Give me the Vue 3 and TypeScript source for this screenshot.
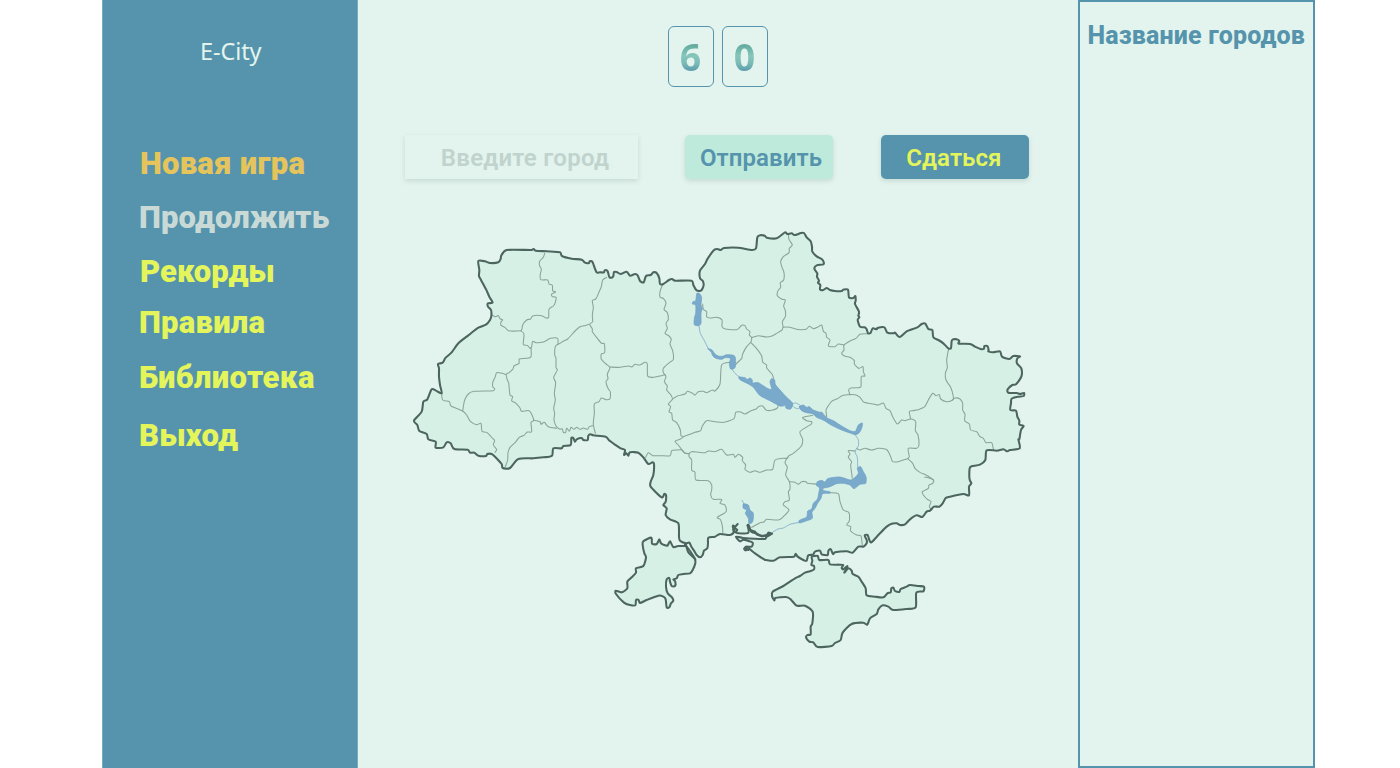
<script setup lang="ts">
type Piece = [number, number, string]

interface MenuItem {
  label: string
  kind: string
}

const menu: MenuItem[] = [
  { label: 'Новая игра', kind: 'new' },
  { label: 'Продолжить', kind: 'resume' },
  { label: 'Рекорды', kind: 'records' },
  { label: 'Правила', kind: 'rules' },
  { label: 'Библиотека', kind: 'library' },
  { label: 'Выход', kind: 'exit' },
]

const digits: string[] = ['6', '0']

// Each piece is [offset x, offset y, "x,y x,y ..."]; pieces are joined into one
// line whose corners are lightly rounded.
function path(pieces: Piece[], closed = false): string {
  const pts = pieces.flatMap(([dx, dy, s]) =>
    s.trim().split(/\s+/).map((p) => {
      const [x, y] = p.split(',').map(Number)
      return [x + dx, y + dy]
    }),
  )
  const n = pts.length
  const at = (i: number) => (closed ? pts[(i + n) % n] : pts[Math.max(0, Math.min(n - 1, i))])
  const k = 0.13
  let d = `M${pts[0][0]} ${pts[0][1]}`
  for (let i = 0; i < (closed ? n : n - 1); i++) {
    const [a, b, c, e] = [at(i - 1), at(i), at(i + 1), at(i + 2)]
    const limit = Math.hypot(c[0] - b[0], c[1] - b[1]) * 0.4
    const handle = (vx: number, vy: number) => {
      const len = Math.hypot(vx, vy) * k || 1
      const f = k * Math.min(1, limit / len)
      return [vx * f, vy * f]
    }
    const h1 = handle(c[0] - a[0], c[1] - a[1])
    const h2 = handle(e[0] - b[0], e[1] - b[1])
    const q = [b[0] + h1[0], b[1] + h1[1], c[0] - h2[0], c[1] - h2[1], c[0], c[1]]
    d += 'C' + q.map((v) => v.toFixed(1)).join(' ')
  }
  return d + (closed ? 'Z' : '')
}

const land: string[] = [
  path([
    [0, 0, '125,490 120,465 117,440 117,415 114,402 128,398 137,383 155,367 175,340 205,316 235,293 258,284 270,270 274,258 273,240 264,230 264,220 278,218 268,200 258,178 243,150 237,138 238,120 235,93 255,94 270,99 295,97 302,87 304,76 320,60 395,60 401,57 407,62 440,64 480,67 486,78 515,86 545,89 555,98 567,99 569,94 577,95 582,108 590,127'],
    [600, 0, '0,127 12,127 14,121 22,122 25,130 28,141 35,143 40,138 42,126 50,126 62,132 80,125 90,137 105,132 113,136 120,153 131,157 138,138 152,135 160,127 170,129 178,145 180,162 190,162 207,150 216,147 225,152 275,152 280,165 288,179 297,183 305,180 311,165 308,152 300,145 300,122 315,102 323,86 342,60 352,57 362,60 372,54 415,53 440,58 455,60 468,55 472,22 480,16 494,17 500,23 530,25 555,7 562,12 575,10 583,15 595,12 602,9'],
    [1200, 0, '12,9 20,22 32,34 36,50 37,65 50,79 65,87 71,96 70,103 50,106 43,116 52,130 51,140 57,152 54,158 61,165 60,178 70,180 80,174 90,180 105,183 125,183 130,179 144,179 147,202 160,204 166,198 167,212 165,222 177,245 175,257 178,262 173,270 180,290 194,292 200,298 204,310 212,308 218,295 230,298 232,294 253,292 262,308 280,310 285,308 299,321 320,304 330,300 352,292 365,282 376,281 385,297 397,300 400,322 415,330 430,340 445,355 453,354 455,333 460,328 470,328 478,333 476,341 510,342 525,350 542,357 552,356 553,348 562,348 566,360 565,364 580,367 600,364 606,380 628,387 640,378 660,379 652,385 651,400 664,415 664,440 648,463 637,465 623,478 625,488 650,489 660,492 672,489 671,498 655,500 635,506 633,520 631,540 648,542 652,560 658,572 658,584 671,588 663,600 658,628 655,628 659,655 630,660 622,664 610,658 590,662 560,661 556,690 540,704 515,709 509,715 508,742'],
    [1050, 630, '660,122 664,130 657,140 657,166 640,162 600,170 587,174 578,190 568,200 552,200 540,212 530,215 517,231 500,226 480,238 465,253 450,255 440,250 425,251 410,260 388,282 364,307 358,300 353,285 344,286 350,300 350,310 340,320 325,320 308,338 290,334 255,337 249,342 242,327 235,333 233,345 215,343 210,332 195,335 190,343 180,345 174,347 170,362 160,360 143,350 137,341 132,350 90,352 70,362 48,360'],
    [600, 630, '495,360 465,340 445,325 438,331 433,328 438,320 455,320 458,308 445,303 430,299 420,304 408,290 430,294 495,297 500,290 514,282 505,278 500,286 485,287 470,283 465,275 452,270 447,257 443,255 445,278 415,280 405,276 400,268 413,252 405,260 399,257 402,275 390,285 360,282 345,290 325,293 324,310 322,325 312,332 308,345 300,352 290,345 282,332 275,322 268,308 258,310 240,302 237,290 235,250 210,238 197,225 200,205 190,195 197,185 198,165 193,162 185,172 152,140 152,125 160,105 162,72 157,67 145,72 130,52 115,38 90,37 85,47 79,40 72,45 75,30 62,25 45,14 27,1'],
    [0, 0, '617,620 580,616 572,613 565,617 563,630 550,630 545,624 530,628 525,635 520,624 514,624 512,645 490,648 485,655 460,655 456,677 430,682 400,685 355,687 330,714 308,714 305,702 285,680 275,672 262,672 258,678 235,677 223,668 210,668 203,659 163,657 152,640 140,637 130,652 107,653 107,635 85,628 80,612 58,603 52,585 42,572 65,545 70,515 82,508 95,478 108,482'],
  ], true),
  path([[600, 630, '257,312 255,318 235,318 220,321 210,304 203,316 195,316 183,310 178,298 170,312 156,311 154,293 130,304 128,315 133,340 138,352 130,378 108,385 108,398 95,412 82,425 82,445 65,457 47,452 48,462 72,488 90,495 106,496 108,480 116,480 120,489 140,480 175,467 190,470 197,478 200,502 208,502 213,490 220,482 216,472 203,460 198,440 200,418 208,414 210,425 215,438 225,438 226,425 220,418 230,415 235,405 250,402 270,400 278,390 286,370 285,358 278,350 264,335']], true),
  path([[1050, 630, '185,350 187,362 184,375 192,378 192,388 180,394 165,398 150,408 135,415 100,438 68,455 66,468 73,481 76,474 108,471 122,478 140,497 165,497 188,515 187,550 182,560 182,583 172,585 168,592 178,605 190,607 203,621 245,618 255,609 272,600 278,578 305,552 340,548 352,554 360,535 380,522 385,508 398,496 415,500 430,510 470,507 497,502 499,458 520,454 522,440 505,438 480,435 470,440 452,447 448,456 435,453 430,443 424,445 422,457 412,460 400,472 375,470 350,466 347,445 335,425 325,410 308,402 305,392 295,385 283,398 288,388 292,378 280,388 275,383 280,375 268,374 240,373 235,360 208,360 203,348']], true),
]

const borders: string[] = [
  path([[0, 0, '434,70 430,82 420,92 418,105 424,118 421,132 422,149 443,150 447,162 457,166 458,182 467,186 455,192 457,200 468,202 466,217 460,228 447,238 446,262 438,264 425,257 398,258 392,267 380,270 368,285 366,297 362,302 325,302 315,292 303,286 303,276 308,270 300,266 295,257 285,260 277,255']]),
  path([[0, 0, '362,302 372,312 370,343 382,346 390,355 395,350 398,334 408,338 430,336 452,325 473,325 475,342 492,332 503,327 525,303 540,290 553,287 566,283']]),
  path([[0, 0, '393,352 393,380 378,385 358,387 357,400 342,408 338,418 318,433 308,430 290,428 286,440 279,455 278,470 284,476 280,482 222,484 205,492 194,510 190,530 188,543']]),
  path([[0, 0, '620,142 608,150 604,170 598,184 588,206 577,212 580,232 577,255 578,275 569,283 577,297 577,305 592,325 605,340 613,341 614,368 604,372 604,388 618,402 630,413 622,432 624,446 618,455 624,475 631,486 630,506 618,509 604,504 597,515 583,522 583,550 580,582 586,610']]),
  path([[0, 0, '475,342 466,350 464,374 468,385 468,412 472,420 461,442 467,458 463,490 466,510 461,535 464,550 462,570 468,588 478,597 487,597 490,607 497,607 500,594 508,604 513,592 522,598 530,592 540,598 550,594 562,598 568,590 580,587']]),
  path([[0, 0, '125,490 128,510 148,515 153,528 188,543 200,555 212,575 230,584 243,580 246,604 260,607 278,625 284,632 280,645 290,658 285,667']]),
  path([[0, 0, '318,433 322,450 326,458 330,495 338,500 335,512 348,520 360,534 365,544 387,542 396,555 401,571 393,577 395,605 382,606 372,616 358,622 345,638 330,652 324,668 323,690 316,710']]),
  path([[0, 0, '401,571 420,575 423,583 433,577 445,590 470,595']]),
  path([[600, 0, '30,411 60,412 85,408 95,411 105,403 120,405 135,397 142,402 143,438 160,442 180,438 195,434']]),
  path([[600, 0, '187,165 180,185 180,202 190,205 198,220 192,238 202,248 205,268 198,280 202,295 195,310 207,318 214,328 210,342 218,362 220,388 208,398 190,415 190,428 198,440 193,455 202,468 200,480 213,495 217,508 205,522 212,530 207,545 215,550 218,570 230,578 241,600 243,617 250,620 240,628 225,634 235,645 246,660 254,669 266,671']]),
  path([[600, 0, '217,508 232,498 255,492 262,484 278,490 285,495 295,485 310,484 320,488 337,480 345,483 360,462 365,405 390,397']]),
  path([[600, 0, '250,620 270,613 285,607 302,602 307,588 320,572 345,575 372,577 402,566 407,547 422,546 435,552 450,544 470,536 475,530 488,528 498,540 515,541 532,534 535,522']]),
  path([[600, 0, '308,222 310,238 320,245 320,260 330,264 350,262 366,270 366,290 376,297 410,299 425,286 435,287 440,297 450,305 448,315 455,323 452,337 440,350 428,372 425,385 407,403']]),
  path([[600, 0, '455,323 475,317 500,321 518,317 530,310 546,300 550,292 570,292 590,298'], [1200, 0, '0,299 18,298 28,289 40,296 55,290 65,285 70,304 78,310 80,322 90,330 85,348 105,350 115,342 132,345']]),
  path([[600, 0, '452,337 470,356 485,378 488,396 500,405 500,414 516,432 521,445']]),
  path([[600, 0, '565,12 567,28 577,45 568,55 567,68 550,80 542,95 546,112 552,128 551,150 541,158 542,172 534,182 532,197 546,208 556,210 551,228 556,242 556,260 547,275 550,292']]),
  path([[1200, 0, '200,311 180,313 168,325 150,333 132,345 132,360 125,370 135,379 150,382 163,392 163,402 176,415 189,410 190,425 195,438 184,440 183,470 175,473 153,474 146,480 150,495']]),
  path([[1200, 0, '80,560 78,540 82,532 95,514 112,506 130,496 165,494 180,502 192,517 220,522 235,525 250,519 258,535 270,542 278,560 292,582 305,570 315,572 332,567 347,575 346,602 354,615 357,645 350,655 325,655 328,680 324,686 338,700 345,715 360,727 382,737 400,749']]),
  path([[1200, 0, '332,567 328,545 338,542 355,539 374,530 385,510 398,490 408,497 418,494 422,507 440,515 458,510 460,500 452,472 438,450 436,430 442,412 440,390 446,356']]),
  path([[1200, 0, '458,510 465,504 480,507 488,520 488,540 495,553 494,572 508,582 512,600 530,605 540,620 550,625 558,638 575,638 580,658']]),
  path([[1200, 0, '170,655 180,660 195,655 215,660 235,655 258,658 265,665 272,680 278,695 295,695 310,690 324,686']]),
  path([[600, 0, '137,682 145,668 158,677 180,677 210,677 215,662 230,660 246,660 254,669 266,671 275,665 297,667 315,668 325,663 345,665 365,658 380,675 400,673 405,682 415,673 428,682 427,692 437,705 435,718 450,727 465,722 480,727 500,720 518,718 525,690 548,685 562,685 566,678 580,670 604,648 608,628 600,605 633,583 635,575 620,572 608,562 638,556']]),
  path([[600, 630, '268,40 267,50 275,60 275,90 285,97 288,120 325,122 335,135 335,150 332,165 340,178 365,178 360,190 375,195 378,215 352,232 362,240 368,265 368,282']]),
  path([[600, 630, '562,52 555,68 562,82 557,105 568,125 570,148 565,155 568,180 555,185 550,195 567,210 550,230 535,240 500,238 492,246 480,248 455,262']]),
  path([[600, 630, '568,125 585,127 595,133 605,125 618,125 622,130 648,132']]),
  path([[1050, 630, '317,33 295,32 300,42 295,52 305,65 302,75 307,115']]),
  path([[1050, 630, '524,112 530,112 550,120 548,130 537,135 535,145 517,155 520,165 532,178 543,185 538,200 545,210']]),
  path([[1050, 630, '240,158 265,161 270,185 280,210 297,218 298,242 290,255 302,260 302,273 320,285 333,288 337,318']]),
]

const water: string[] = [
  path([[600, 0, '290,192 296,189 302,195 305,205 303,225 307,235 303,250 303,280 296,287 283,284 283,265 287,250 287,225 277,222 280,214 287,213']], true),
  path([[600, 0, '324,356 336,360 345,372 358,379 370,378 380,374 403,377 407,395 405,413 392,417 388,400 391,385 375,383 365,388 348,385 338,377 334,367']], true),
  path([[600, 0, '417,441 435,443 442,448 450,444 457,450 458,459 475,458 500,474 515,478 510,456 515,446 524,450 526,463 540,480 560,502 578,520 572,537 558,535 556,527 540,528 510,512 497,506 478,495 460,472 445,462 420,449']], true),
  path([[600, 0, '598,530 610,525 620,532 628,530 640,540 660,547'], [1200, 0, '65,546 80,563 100,572 130,591 150,602 166,604 175,585 187,579 185,595 177,609 166,614 150,609 125,600 95,586 73,572 50,562 38,551 20,548 5,542']], true),
  path([[1050, 630, '203,125 215,121 225,126 235,115 270,111 300,120 312,115 325,100 322,85 332,80 340,95 348,110 347,130 330,133 312,146 300,135 280,130 260,131 240,140 219,145 222,152 240,155 239,160 218,161 213,175 203,190 195,205 186,217 187,235 168,243 149,249 148,241 170,231 173,213 185,207 190,190 202,178 207,155 208,143 198,135']], true),
  path([[600, 630, '430,192 445,195 450,210 460,220 458,245 447,251 445,235 436,220 440,210 430,205']], true),
]

const streams: string[] = [
  path([[600, 0, '297,287 301,310 312,330 325,356']]),
  path([[600, 0, '396,417 405,430 420,442']]),
  path([[600, 0, '575,522 588,519 602,528 595,536 582,532 575,522']]),
  path([[1200, 0, '165,614 175,630 175,648 165,665 172,682 173,712']]),
  path([[600, 630, '426,181 433,193']]),
  path([[1050, 630, '148,247 120,253 100,264 84,267 66,278']]),
]

const inlets: string[] = [
  path([[600, 630, '398,260 412,270 402,276 400,258']]),
  path([[600, 630, '443,257 455,276 470,280 485,289 500,285 516,281']]),
  path([[600, 630, '255,314 268,330 278,345 286,358']]),
  path([[600, 630, '433,326 445,330 438,323']]),
]
</script>

<template>
  <div class="page">
    <aside class="sidebar">
      <div class="brand">E-City</div>
      <nav class="menu">
        <a v-for="item in menu" :key="item.kind" :class="['menu-item', item.kind]">{{ item.label }}</a>
      </nav>
    </aside>

    <main class="board">
      <div class="timer">
        <div v-for="(d, i) in digits" :key="i" class="digit"><span>{{ d }}</span></div>
      </div>

      <div class="controls">
        <div class="field">Введите город</div>
        <button class="btn send">Отправить</button>
        <button class="btn give-up">Сдаться</button>
      </div>

      <svg class="map" viewBox="0 0 1890 1260" width="630" height="420">
        <path v-for="(d, i) in land" :key="'l' + i" class="land" :d="d" />
        <path v-for="(d, i) in borders" :key="'b' + i" class="border" :d="d" />
        <path v-for="(d, i) in streams" :key="'s' + i" class="stream" :d="d" />
        <path v-for="(d, i) in water" :key="'w' + i" class="water" :d="d" />
        <path v-for="(d, i) in land" :key="'c' + i" class="coast" :d="d" />
        <path v-for="(d, i) in inlets" :key="'i' + i" class="coast" :d="d" />
      </svg>
    </main>

    <aside class="cities">
      <h2>Название городов</h2>
    </aside>
  </div>
</template>

<style>
body {
  margin: 0;
  background: #fff;
}
</style>

<style scoped>
.page {
  box-sizing: border-box;
  display: flex;
  width: 1400px;
  height: 768px;
  padding: 0 85px 0 102px;
  overflow: hidden;
  font-family: Roboto, "Liberation Sans", sans-serif;
}
.sidebar {
  box-sizing: border-box;
  width: 256px;
  flex: none;
  background: #5594ac;
  border-left: 1px solid #78abbd;
  border-right: 1px solid #78abbd;
}
.brand {
  margin: 35px 0 0 97px;
  height: 32px;
  font: 450 23.5px/32px "Noto Sans", sans-serif;
  letter-spacing: -0.1px;
  color: #e3f4ee;
}
.menu {
  display: flex;
  flex-direction: column;
  padding: 79px 0 0 36px;
}
.menu-item {
  height: 36px;
  font-size: 31px;
  line-height: 36px;
  font-weight: 900;
  color: #e4f55b;
  white-space: nowrap;
}
.new { color: #e5c45c; margin-left: 1px; letter-spacing: 0.25px; }
.resume { color: #c9dad6; margin-top: 18px; letter-spacing: 0.1px; }
.records { margin-top: 18px; margin-left: 1px; }
.rules { margin-top: 15px; letter-spacing: 0.25px; }
.library { margin-top: 19px; letter-spacing: 0.35px; }
.exit { margin-top: 22px; letter-spacing: 0.2px; }
.board {
  width: 720px;
  flex: none;
  background: #e3f4ee;
}
.timer {
  display: flex;
  gap: 8px;
  padding: 26px 0 0 310px;
}
.digit {
  box-sizing: border-box;
  width: 46px;
  height: 61px;
  border: 1px solid #5594ac;
  border-radius: 6px;
  text-align: center;
}
.digit span {
  display: inline-block;
  margin-left: -1px;
  font: 700 37.5px/60px "Noto Sans", sans-serif;
  color: transparent;
  background: linear-gradient(#5fa89b 28%, #86c6bb 48%, #7cbcb6 60%, #5594ac 76%);
  background-clip: text;
  -webkit-background-clip: text;
}
.controls {
  display: flex;
  padding: 48px 0 0 47px;
}
.field,
.btn {
  box-sizing: border-box;
  height: 44px;
  padding: 0;
  border: 0;
  font: 600 24px/46px Roboto, "Liberation Sans", sans-serif;
  text-align: center;
  white-space: nowrap;
  box-shadow: 0 2px 5px rgba(50, 80, 75, 0.16);
}
.field {
  width: 233px;
  padding-left: 7px;
  background: #e3f4ee;
  color: #c0d3cc;
  letter-spacing: 0.25px;
}
.btn {
  padding-top: 1px;
  line-height: 44px;
  width: 148px;
  border-radius: 5px;
}
.send {
  margin-left: 47px;
  padding-left: 4px;
  letter-spacing: 0.1px;
  background: #beeadb;
  color: #5594ac;
}
.give-up {
  margin-left: 48.4px;
  padding-right: 3px;
  letter-spacing: 0.1px;
  background: #5594ac;
  color: #e4f55b;
}
.map {
  display: block;
  margin: 51px 0 0 42px;
  overflow: visible;
}
.map path {
  fill: none;
  stroke-linejoin: round;
  stroke-linecap: round;
}
.map .land { fill: #d6f0e5; }
.map .border { stroke: #8ba39a; stroke-width: 3.2; }
.map .stream { stroke: #8fb6d0; stroke-width: 3; }
.map .water { fill: #7aaacb; stroke: #6b9dc4; stroke-width: 2; }
.map .coast { stroke: #4c655f; stroke-width: 6.2; }
.cities {
  box-sizing: border-box;
  width: 237px;
  flex: none;
  border: 2px solid #5594ac;
  background: #e3f4ee;
}
.cities h2 {
  margin: 19px 0 0 7.5px;
  font-size: 25px;
  line-height: 30px;
  font-weight: 800;
  letter-spacing: 0.17px;
  color: #5594ac;
  white-space: nowrap;
}
</style>
